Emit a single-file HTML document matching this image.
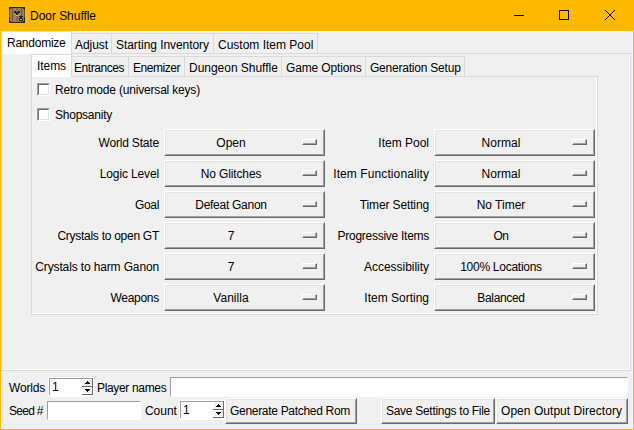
<!DOCTYPE html>
<html><head><meta charset="utf-8">
<style>
*{margin:0;padding:0;box-sizing:border-box}
html,body{width:634px;height:430px;overflow:hidden;background:#F0F0F0;font-family:"Liberation Sans",sans-serif;font-size:12px;color:#000}
.a{position:absolute}
.t{position:absolute;white-space:pre;line-height:14px}
#tb{left:0;top:0;width:634px;height:31px;background:#FFB900}
#bl{left:0;top:31px;width:1px;height:399px;background:#FFB900}
#br{left:633px;top:31px;width:1px;height:399px;background:#FFB900}
#bb{left:0;top:429px;width:634px;height:1px;background:#FFB900}
.tab{position:absolute;background:#F0F0F0;border:1px solid #D9D9D9;border-bottom:none}
.tabsel{position:absolute;background:#FFFFFF;border:1px solid #D9D9D9;border-bottom:none}
.pane{position:absolute;border:1px solid #D9D9D9}
.pane:before{content:"";position:absolute;left:0;top:0;right:0;bottom:0;border-right:1px solid #FFF;border-bottom:1px solid #FFF}
.om{position:absolute;width:161px;height:27px;background:#F0F0F0;border-top:1px solid #FFF;border-left:1px solid #FFF;border-right:1px solid #696969;border-bottom:1px solid #696969}
.om:before{content:"";position:absolute;left:0;top:0;right:0;bottom:0;border-top:1px solid #E3E3E3;border-left:1px solid #E3E3E3;border-right:1px solid #A0A0A0;border-bottom:1px solid #A0A0A0}
.om .ind{position:absolute;left:137px;top:9px;width:15px;height:6px;border-top:1px solid #FFF;border-left:1px solid #FFF;border-right:1px solid #696969;border-bottom:1px solid #696969}
.om .ind:before{content:"";position:absolute;left:0;top:0;right:0;bottom:0;border-right:1px solid #A0A0A0;border-bottom:1px solid #A0A0A0}
.om .v{position:absolute;left:0;width:132px;top:6px;text-align:center;line-height:14px;white-space:pre}
.lbl{position:absolute;text-align:right;white-space:pre;line-height:14px}
.cb{position:absolute;width:13px;height:13px;background:#FFF;border-top:1px solid #A0A0A0;border-left:1px solid #A0A0A0;border-right:1px solid #FFF;border-bottom:1px solid #FFF}
.cb:before{content:"";position:absolute;left:0;top:0;right:0;bottom:0;border-top:1px solid #696969;border-left:1px solid #696969;border-right:1px solid #E3E3E3;border-bottom:1px solid #E3E3E3}
.ent{position:absolute;background:#FFF;border-top:1px solid #A0A0A0;border-left:1px solid #A0A0A0;border-right:1px solid #FFF;border-bottom:1px solid #FFF}
.sp{position:absolute;background:#FFF}
.sp:before{content:"";position:absolute;left:1px;top:1px;right:2px;bottom:2px;border-top:1px solid #A0A0A0;border-left:1px solid #A0A0A0}
.btn{position:absolute;background:#F0F0F0;border-top:1px solid #FFF;border-left:1px solid #FFF;border-right:1px solid #696969;border-bottom:1px solid #696969}
.btn:before{content:"";position:absolute;left:0;top:0;right:0;bottom:0;border-top:1px solid #E3E3E3;border-left:1px solid #E3E3E3;border-right:1px solid #A0A0A0;border-bottom:1px solid #A0A0A0}
</style></head><body>
<div class="a" id="tb"></div>
<div class="a" id="bl"></div>
<div class="a" id="br"></div>
<div class="a" id="bb"></div>
<div class="a" style="left:1px;top:31px;width:632px;height:1px;background:#F4F4F8"></div>
<div class="a" style="left:1px;top:31px;width:1px;height:398px;background:#F4F4F8"></div>
<div class="a" style="left:632px;top:31px;width:1px;height:398px;background:#F4F4F8"></div>
<div class="a" style="left:1px;top:428px;width:632px;height:1px;background:#F4F4F8"></div>

<!-- title bar -->
<svg class="a" style="left:9px;top:7px" width="16" height="16" viewBox="0 0 16 16" shape-rendering="crispEdges"><rect x="0" y="0" width="16" height="1" fill="#1F2A2B"/><rect x="0" y="1" width="2" height="1" fill="#1F2A2B"/><rect x="2" y="1" width="1" height="1" fill="#A07B54"/><rect x="3" y="1" width="1" height="1" fill="#6E5235"/><rect x="4" y="1" width="3" height="1" fill="#A07B54"/><rect x="7" y="1" width="2" height="1" fill="#8A6846"/><rect x="9" y="1" width="3" height="1" fill="#A07B54"/><rect x="12" y="1" width="1" height="1" fill="#6E5235"/><rect x="13" y="1" width="1" height="1" fill="#A07B54"/><rect x="14" y="1" width="2" height="1" fill="#1F2A2B"/><rect x="0" y="2" width="1" height="1" fill="#1F2A2B"/><rect x="1" y="2" width="2" height="1" fill="#A07B54"/><rect x="3" y="2" width="1" height="1" fill="#6E5235"/><rect x="4" y="2" width="3" height="1" fill="#A07B54"/><rect x="7" y="2" width="2" height="1" fill="#8A6846"/><rect x="9" y="2" width="3" height="1" fill="#A07B54"/><rect x="12" y="2" width="1" height="1" fill="#6E5235"/><rect x="13" y="2" width="2" height="1" fill="#A07B54"/><rect x="15" y="2" width="1" height="1" fill="#1F2A2B"/><rect x="0" y="3" width="1" height="1" fill="#6B5238"/><rect x="1" y="3" width="2" height="1" fill="#A07B54"/><rect x="3" y="3" width="1" height="1" fill="#6E5235"/><rect x="4" y="3" width="3" height="1" fill="#A07B54"/><rect x="7" y="3" width="2" height="1" fill="#8A6846"/><rect x="9" y="3" width="3" height="1" fill="#A07B54"/><rect x="12" y="3" width="1" height="1" fill="#6E5235"/><rect x="13" y="3" width="2" height="1" fill="#A07B54"/><rect x="15" y="3" width="1" height="1" fill="#6B5238"/><rect x="0" y="4" width="1" height="1" fill="#6B5238"/><rect x="1" y="4" width="2" height="1" fill="#A07B54"/><rect x="3" y="4" width="1" height="1" fill="#6E5235"/><rect x="4" y="4" width="1" height="1" fill="#A07B54"/><rect x="5" y="4" width="2" height="1" fill="#1F2A2B"/><rect x="7" y="4" width="2" height="1" fill="#8A6846"/><rect x="9" y="4" width="2" height="1" fill="#1F2A2B"/><rect x="11" y="4" width="1" height="1" fill="#A07B54"/><rect x="12" y="4" width="1" height="1" fill="#6E5235"/><rect x="13" y="4" width="2" height="1" fill="#A07B54"/><rect x="15" y="4" width="1" height="1" fill="#6B5238"/><rect x="0" y="5" width="1" height="1" fill="#6B5238"/><rect x="1" y="5" width="2" height="1" fill="#A07B54"/><rect x="3" y="5" width="1" height="1" fill="#6E5235"/><rect x="4" y="5" width="1" height="1" fill="#A07B54"/><rect x="5" y="5" width="6" height="1" fill="#1F2A2B"/><rect x="11" y="5" width="1" height="1" fill="#A07B54"/><rect x="12" y="5" width="1" height="1" fill="#6E5235"/><rect x="13" y="5" width="2" height="1" fill="#A07B54"/><rect x="15" y="5" width="1" height="1" fill="#6B5238"/><rect x="0" y="6" width="1" height="1" fill="#6B5238"/><rect x="1" y="6" width="2" height="1" fill="#A07B54"/><rect x="3" y="6" width="1" height="1" fill="#6E5235"/><rect x="4" y="6" width="1" height="1" fill="#A07B54"/><rect x="5" y="6" width="1" height="1" fill="#D6BD8A"/><rect x="6" y="6" width="4" height="1" fill="#1F2A2B"/><rect x="10" y="6" width="1" height="1" fill="#D6BD8A"/><rect x="11" y="6" width="1" height="1" fill="#A07B54"/><rect x="12" y="6" width="1" height="1" fill="#6E5235"/><rect x="13" y="6" width="2" height="1" fill="#A07B54"/><rect x="15" y="6" width="1" height="1" fill="#6B5238"/><rect x="0" y="7" width="1" height="1" fill="#6B5238"/><rect x="1" y="7" width="2" height="1" fill="#A07B54"/><rect x="3" y="7" width="1" height="1" fill="#6E5235"/><rect x="4" y="7" width="2" height="1" fill="#A07B54"/><rect x="6" y="7" width="1" height="1" fill="#D6BD8A"/><rect x="7" y="7" width="2" height="1" fill="#1F2A2B"/><rect x="9" y="7" width="1" height="1" fill="#D6BD8A"/><rect x="10" y="7" width="2" height="1" fill="#A07B54"/><rect x="12" y="7" width="1" height="1" fill="#6E5235"/><rect x="13" y="7" width="2" height="1" fill="#A07B54"/><rect x="15" y="7" width="1" height="1" fill="#6B5238"/><rect x="0" y="8" width="1" height="1" fill="#6B5238"/><rect x="1" y="8" width="2" height="1" fill="#A07B54"/><rect x="3" y="8" width="1" height="1" fill="#6E5235"/><rect x="4" y="8" width="3" height="1" fill="#A07B54"/><rect x="7" y="8" width="2" height="1" fill="#D6BD8A"/><rect x="9" y="8" width="3" height="1" fill="#A07B54"/><rect x="12" y="8" width="1" height="1" fill="#6E5235"/><rect x="13" y="8" width="2" height="1" fill="#A07B54"/><rect x="15" y="8" width="1" height="1" fill="#6B5238"/><rect x="0" y="9" width="1" height="1" fill="#6B5238"/><rect x="1" y="9" width="2" height="1" fill="#A07B54"/><rect x="3" y="9" width="1" height="1" fill="#6E5235"/><rect x="4" y="9" width="3" height="1" fill="#A07B54"/><rect x="7" y="9" width="2" height="1" fill="#8A6846"/><rect x="9" y="9" width="1" height="1" fill="#A07B54"/><rect x="10" y="9" width="4" height="1" fill="#1F2A2B"/><rect x="14" y="9" width="1" height="1" fill="#A07B54"/><rect x="15" y="9" width="1" height="1" fill="#6B5238"/><rect x="0" y="10" width="1" height="1" fill="#1F2A2B"/><rect x="1" y="10" width="2" height="1" fill="#A07B54"/><rect x="3" y="10" width="1" height="1" fill="#6E5235"/><rect x="4" y="10" width="3" height="1" fill="#A07B54"/><rect x="7" y="10" width="2" height="1" fill="#8A6846"/><rect x="9" y="10" width="2" height="1" fill="#A07B54"/><rect x="11" y="10" width="2" height="1" fill="#1F2A2B"/><rect x="13" y="10" width="2" height="1" fill="#A07B54"/><rect x="15" y="10" width="1" height="1" fill="#1F2A2B"/><rect x="0" y="11" width="1" height="1" fill="#1F2A2B"/><rect x="1" y="11" width="2" height="1" fill="#A07B54"/><rect x="3" y="11" width="1" height="1" fill="#6E5235"/><rect x="4" y="11" width="3" height="1" fill="#A07B54"/><rect x="7" y="11" width="2" height="1" fill="#8A6846"/><rect x="9" y="11" width="1" height="1" fill="#A07B54"/><rect x="10" y="11" width="4" height="1" fill="#1F2A2B"/><rect x="14" y="11" width="1" height="1" fill="#A07B54"/><rect x="15" y="11" width="1" height="1" fill="#1F2A2B"/><rect x="0" y="12" width="1" height="1" fill="#1F2A2B"/><rect x="1" y="12" width="2" height="1" fill="#A07B54"/><rect x="3" y="12" width="1" height="1" fill="#6E5235"/><rect x="4" y="12" width="3" height="1" fill="#A07B54"/><rect x="7" y="12" width="2" height="1" fill="#8A6846"/><rect x="9" y="12" width="1" height="1" fill="#A07B54"/><rect x="10" y="12" width="1" height="1" fill="#1F2A2B"/><rect x="11" y="12" width="2" height="1" fill="#D6BD8A"/><rect x="13" y="12" width="1" height="1" fill="#1F2A2B"/><rect x="14" y="12" width="1" height="1" fill="#A07B54"/><rect x="15" y="12" width="1" height="1" fill="#1F2A2B"/><rect x="0" y="13" width="1" height="1" fill="#1F2A2B"/><rect x="1" y="13" width="2" height="1" fill="#A07B54"/><rect x="3" y="13" width="1" height="1" fill="#6E5235"/><rect x="4" y="13" width="3" height="1" fill="#A07B54"/><rect x="7" y="13" width="2" height="1" fill="#8A6846"/><rect x="9" y="13" width="1" height="1" fill="#A07B54"/><rect x="10" y="13" width="4" height="1" fill="#1F2A2B"/><rect x="14" y="13" width="1" height="1" fill="#A07B54"/><rect x="15" y="13" width="1" height="1" fill="#1F2A2B"/><rect x="0" y="14" width="2" height="1" fill="#1F2A2B"/><rect x="2" y="14" width="1" height="1" fill="#A07B54"/><rect x="3" y="14" width="1" height="1" fill="#6E5235"/><rect x="4" y="14" width="3" height="1" fill="#A07B54"/><rect x="7" y="14" width="2" height="1" fill="#8A6846"/><rect x="9" y="14" width="3" height="1" fill="#A07B54"/><rect x="12" y="14" width="1" height="1" fill="#6E5235"/><rect x="13" y="14" width="1" height="1" fill="#A07B54"/><rect x="14" y="14" width="2" height="1" fill="#1F2A2B"/><rect x="0" y="15" width="16" height="1" fill="#1F2A2B"/></svg>
<div class="t" style="left:30px;top:9px;letter-spacing:-0.04px">Door Shuffle</div>
<div class="a" style="left:514px;top:15px;width:10px;height:1px;background:#000"></div>
<div class="a" style="left:559px;top:10px;width:10px;height:10px;border:1px solid #000"></div>
<svg class="a" style="left:605px;top:10px" width="10" height="10" viewBox="0 0 10 10" shape-rendering="crispEdges" fill="#000"><rect x="0" y="0" width="1" height="1"/><rect x="9" y="0" width="1" height="1"/><rect x="1" y="1" width="1" height="1"/><rect x="8" y="1" width="1" height="1"/><rect x="2" y="2" width="1" height="1"/><rect x="7" y="2" width="1" height="1"/><rect x="3" y="3" width="1" height="1"/><rect x="6" y="3" width="1" height="1"/><rect x="4" y="4" width="1" height="1"/><rect x="5" y="4" width="1" height="1"/><rect x="5" y="5" width="1" height="1"/><rect x="4" y="5" width="1" height="1"/><rect x="6" y="6" width="1" height="1"/><rect x="3" y="6" width="1" height="1"/><rect x="7" y="7" width="1" height="1"/><rect x="2" y="7" width="1" height="1"/><rect x="8" y="8" width="1" height="1"/><rect x="1" y="8" width="1" height="1"/><rect x="9" y="9" width="1" height="1"/><rect x="0" y="9" width="1" height="1"/></svg>


<div class="pane" style="left:1px;top:53px;width:630px;height:318px"></div>
<div class="tab" style="left:71px;top:33px;width:41px;height:20px"></div>
<div class="tab" style="left:111px;top:33px;width:103px;height:20px"></div>
<div class="tab" style="left:213px;top:33px;width:105px;height:20px"></div>
<div class="tabsel" style="left:1px;top:31px;width:71px;height:23px"></div>
<div class="t" style="left:7px;top:36px;letter-spacing:-0.245px;">Randomize</div>
<div class="t" style="left:75px;top:38px;letter-spacing:-0.060px;">Adjust</div>
<div class="t" style="left:116px;top:38px;letter-spacing:-0.059px;">Starting Inventory</div>
<div class="t" style="left:218px;top:38px;">Custom Item Pool</div>
<div class="pane" style="left:31px;top:76px;width:567px;height:239px"></div>
<div class="tab" style="left:71px;top:56px;width:58px;height:20px"></div>
<div class="tab" style="left:128px;top:56px;width:57px;height:20px"></div>
<div class="tab" style="left:184px;top:56px;width:98px;height:20px"></div>
<div class="tab" style="left:281px;top:56px;width:85px;height:20px"></div>
<div class="tab" style="left:365px;top:56px;width:100px;height:20px"></div>
<div class="tabsel" style="left:31px;top:54px;width:41px;height:23px"></div>
<div class="t" style="left:37px;top:59px;letter-spacing:-0.069px;">Items</div>
<div class="t" style="left:74px;top:61px;letter-spacing:-0.426px;">Entrances</div>
<div class="t" style="left:133px;top:61px;letter-spacing:-0.461px;">Enemizer</div>
<div class="t" style="left:189px;top:61px;letter-spacing:-0.026px;">Dungeon Shuffle</div>
<div class="t" style="left:286px;top:61px;letter-spacing:-0.140px;">Game Options</div>
<div class="t" style="left:370px;top:61px;letter-spacing:-0.217px;">Generation Setup</div>
<div class="cb" style="left:37px;top:83px"></div>
<div class="t" style="left:55px;top:83px;letter-spacing:-0.188px;">Retro mode (universal keys)</div>
<div class="cb" style="left:37px;top:108px"></div>
<div class="t" style="left:55px;top:108px;letter-spacing:-0.237px;">Shopsanity</div>
<div class="t" style="left:-241px;width:400px;top:136px;text-align:right;letter-spacing:-0.180px;">World State</div>
<div class="t" style="left:29px;width:400px;top:136px;text-align:right;">Item Pool</div>
<div class="om" style="left:164px;top:129px"><div class="v" style="">Open</div><div class="ind"></div></div>
<div class="om" style="left:434px;top:129px"><div class="v" style="letter-spacing:0.038px;">Normal</div><div class="ind"></div></div>
<div class="t" style="left:-241px;width:400px;top:167px;text-align:right;letter-spacing:-0.138px;">Logic Level</div>
<div class="t" style="left:29px;width:400px;top:167px;text-align:right;letter-spacing:0.097px;">Item Functionality</div>
<div class="om" style="left:164px;top:160px"><div class="v" style="letter-spacing:-0.130px;">No Glitches</div><div class="ind"></div></div>
<div class="om" style="left:434px;top:160px"><div class="v" style="letter-spacing:0.038px;">Normal</div><div class="ind"></div></div>
<div class="t" style="left:-241px;width:400px;top:198px;text-align:right;letter-spacing:-0.340px;">Goal</div>
<div class="t" style="left:29px;width:400px;top:198px;text-align:right;letter-spacing:-0.125px;">Timer Setting</div>
<div class="om" style="left:164px;top:191px"><div class="v" style="letter-spacing:-0.268px;">Defeat Ganon</div><div class="ind"></div></div>
<div class="om" style="left:434px;top:191px"><div class="v" style="">No Timer</div><div class="ind"></div></div>
<div class="t" style="left:-241px;width:400px;top:229px;text-align:right;letter-spacing:-0.269px;">Crystals to open GT</div>
<div class="t" style="left:29px;width:400px;top:229px;text-align:right;letter-spacing:-0.272px;">Progressive Items</div>
<div class="om" style="left:164px;top:222px"><div class="v" style="">7</div><div class="ind"></div></div>
<div class="om" style="left:434px;top:222px"><div class="v" style="letter-spacing:-0.508px;">On</div><div class="ind"></div></div>
<div class="t" style="left:-241px;width:400px;top:260px;text-align:right;letter-spacing:-0.137px;">Crystals to harm Ganon</div>
<div class="t" style="left:29px;width:400px;top:260px;text-align:right;letter-spacing:-0.028px;">Accessibility</div>
<div class="om" style="left:164px;top:253px"><div class="v" style="">7</div><div class="ind"></div></div>
<div class="om" style="left:434px;top:253px"><div class="v" style="letter-spacing:-0.265px;">100% Locations</div><div class="ind"></div></div>
<div class="t" style="left:-241px;width:400px;top:291px;text-align:right;letter-spacing:-0.269px;">Weapons</div>
<div class="t" style="left:29px;width:400px;top:291px;text-align:right;">Item Sorting</div>
<div class="om" style="left:164px;top:284px"><div class="v" style="letter-spacing:0.051px;">Vanilla</div><div class="ind"></div></div>
<div class="om" style="left:434px;top:284px"><div class="v" style="letter-spacing:-0.343px;">Balanced</div><div class="ind"></div></div>
<div class="t" style="left:9px;top:381px;letter-spacing:-0.188px;">Worlds</div>
<div class="sp" style="left:48px;top:377px;width:46px;height:20px"><div class="t" style="left:4px;top:3px;letter-spacing:-1.688px;">1</div><svg class="a" style="left:34px;top:1px" width="11" height="17" viewBox="0 0 11 17" shape-rendering="crispEdges"><rect x="1" y="2" width="9" height="6" fill="#F0F0F0"/><rect x="1" y="10" width="9" height="5" fill="#F0F0F0"/><rect x="0" y="8" width="11" height="1" fill="#696969"/><rect x="0" y="16" width="11" height="1" fill="#696969"/><rect x="10" y="0" width="1" height="17" fill="#696969"/><rect x="5" y="3" width="1" height="1" fill="#000"/><rect x="4" y="4" width="3" height="1" fill="#000"/><rect x="3" y="5" width="5" height="1" fill="#000"/><rect x="3" y="11" width="5" height="1" fill="#000"/><rect x="4" y="12" width="3" height="1" fill="#000"/><rect x="5" y="13" width="1" height="1" fill="#000"/></svg></div>
<div class="t" style="left:97px;top:381px;letter-spacing:-0.340px;">Player names</div>
<div class="ent" style="left:170px;top:377px;width:458px;height:20px"></div>
<div class="t" style="left:9px;top:404px;letter-spacing:-0.708px;">Seed #</div>
<div class="ent" style="left:47px;top:401px;width:94px;height:19px"></div>
<div class="t" style="left:145px;top:404px;letter-spacing:-0.046px;">Count</div>
<div class="sp" style="left:179px;top:400px;width:46px;height:20px"><div class="t" style="left:4px;top:3px;letter-spacing:-1.688px;">1</div><svg class="a" style="left:34px;top:1px" width="11" height="17" viewBox="0 0 11 17" shape-rendering="crispEdges"><rect x="1" y="2" width="9" height="6" fill="#F0F0F0"/><rect x="1" y="10" width="9" height="5" fill="#F0F0F0"/><rect x="0" y="8" width="11" height="1" fill="#696969"/><rect x="0" y="16" width="11" height="1" fill="#696969"/><rect x="10" y="0" width="1" height="17" fill="#696969"/><rect x="5" y="3" width="1" height="1" fill="#000"/><rect x="4" y="4" width="3" height="1" fill="#000"/><rect x="3" y="5" width="5" height="1" fill="#000"/><rect x="3" y="11" width="5" height="1" fill="#000"/><rect x="4" y="12" width="3" height="1" fill="#000"/><rect x="5" y="13" width="1" height="1" fill="#000"/></svg></div>
<div class="btn" style="left:225px;top:398px;width:132px;height:26px"></div>
<div class="t" style="left:230px;top:404px;letter-spacing:-0.304px;">Generate Patched Rom</div>
<div class="btn" style="left:381px;top:398px;width:114px;height:26px"></div>
<div class="t" style="left:386px;top:404px;letter-spacing:-0.289px;">Save Settings to File</div>
<div class="btn" style="left:496px;top:398px;width:132px;height:26px"></div>
<div class="t" style="left:501px;top:404px;letter-spacing:0.045px;">Open Output Directory</div>
</body></html>
